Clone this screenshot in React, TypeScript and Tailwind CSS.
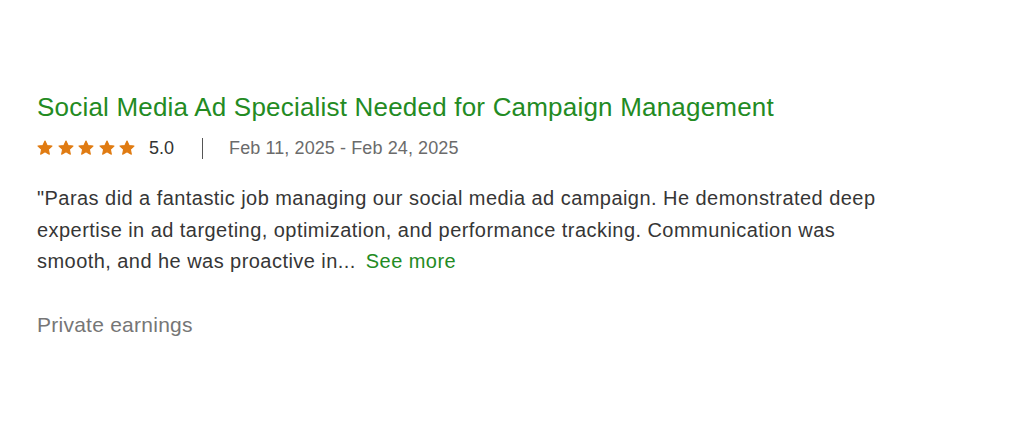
import React from 'react';

const Star = () => (
  <svg className="h-[16px] w-[16px] text-[#e07b12]" viewBox="0 0 20 20" fill="currentColor">
    <path d="M10 1.2l2.6 5.6 6.1.7-4.5 4.2 1.2 6-5.4-3-5.4 3 1.2-6L1.3 7.5l6.1-.7z" stroke="currentColor" strokeWidth="1.4" strokeLinejoin="round" />
  </svg>
);

export default function App() {
  return (
    <div className="h-[427px] w-full bg-white font-['Liberation_Sans',Arial,sans-serif]">
      <div className="px-[37px] pt-[91px]">
        <h2 className="text-[26px] leading-[32px] tracking-[0.2px] text-[#238b23]">
          Social Media Ad Specialist Needed for Campaign Management
        </h2>
        <div className="mt-[13px] flex h-[24px] items-center">
          <div className="flex items-center gap-[4.5px]">
            {[0, 1, 2, 3, 4].map((i) => (
              <Star key={i} />
            ))}
          </div>
          <span className="ml-[14px] text-[18px] text-[#333]">5.0</span>
          <span className="ml-[28px] mr-[26px] h-[21px] w-px bg-[#555]" />
          <span className="text-[18px] tracking-[0.1px] text-[#6b6b6b]">Feb 11, 2025 - Feb 24, 2025</span>
        </div>
        <p className="mt-[23px] text-[20px] leading-[31.5px] tracking-[0.45px] text-[#363636]">
          "Paras did a fantastic job managing our social media ad campaign. He demonstrated deep
          <br />
          expertise in ad targeting, optimization, and performance tracking. Communication was
          <br />
          smooth, and he was proactive in...
          <span className="ml-[10px] text-[#238b23]">See more</span>
        </p>
        <p className="mt-[34px] text-[21px] leading-[26px] tracking-[0.25px] text-[#767676]">Private earnings</p>
      </div>
    </div>
  );
}
